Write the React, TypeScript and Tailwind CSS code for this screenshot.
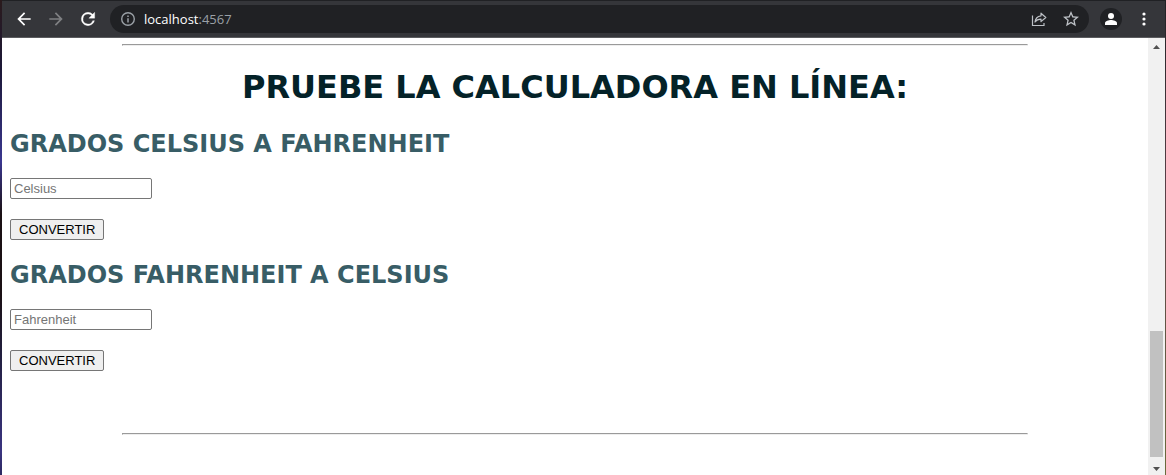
import React from "react";

function BackIcon({ className }: { className: string }) {
  return (
    <svg viewBox="0 0 24 24" className={className} fill="currentColor" aria-hidden="true">
      <path d="M20 11H7.83l5.59-5.59L12 4l-8 8 8 8 1.41-1.41L7.83 13H20z" />
    </svg>
  );
}

function Toolbar() {
  return (
    <header className="flex h-[38px] shrink-0 items-center border-t border-b border-t-[#202124] border-b-[#5b5c5f] bg-[#35363a] pr-[11px] pl-3">
      <nav className="flex items-center gap-3" aria-label="Navegación">
        <button type="button" aria-label="Atrás" className="flex size-5 items-center justify-center text-white">
          <BackIcon className="size-5" />
        </button>
        <button type="button" aria-label="Adelante" className="flex size-5 items-center justify-center text-[#7f8083]">
          <BackIcon className="size-5 rotate-180" />
        </button>
        <button type="button" aria-label="Recargar" className="flex size-5 items-center justify-center text-white">
          <svg viewBox="0 0 24 24" className="size-5 shrink-0" fill="currentColor" stroke="currentColor" strokeWidth="0.4" aria-hidden="true">
            <path d="M17.65 6.35A7.96 7.96 0 0 0 12 4a8 8 0 1 0 7.73 10h-2.08A6 6 0 1 1 12 6c1.66 0 3.14.69 4.22 1.78L13 11h7V4z" />
          </svg>
        </button>
      </nav>
      <div className="ml-3 flex h-7 min-w-0 flex-1 items-center rounded-full bg-[#202124] pr-[10px] pl-[10px]">
        <button type="button" aria-label="Información del sitio" className="mr-2 flex size-4 text-[#9aa0a6]">
          <svg viewBox="0 0 16 16" className="size-4" fill="none" stroke="currentColor" strokeWidth="1.4" aria-hidden="true">
            <circle cx="8" cy="8" r="6.3" />
            <path d="M8 7.2v4.2M8 4.4v1.6" strokeWidth="1.5" />
          </svg>
        </button>
        <div className="min-w-0 flex-1 truncate font-['Open_Sans',sans-serif] text-[13px] leading-5 text-white">
          localhost<span className="text-[#9aa0a6]">:4567</span>
        </div>
        <div className="flex items-center gap-4 text-[#bdc1c6]">
          <button type="button" aria-label="Compartir" className="flex size-4">
            <svg viewBox="0 0 16 16" className="size-4" fill="none" stroke="currentColor" strokeWidth="1.2" aria-hidden="true">
              <path d="M1.500 4.500v10h11.500v-2.500" />
              <path d="M10 2.200 14.800 6.500 10 10.600V8.200C7.200 8.200 5.400 9 4 11c.4-3.200 2.400-5.700 6-6.200z" strokeLinejoin="round" />
            </svg>
          </button>
          <button type="button" aria-label="Agregar a favoritos" className="flex size-4">
            <svg viewBox="2 2 20 20" className="size-4" fill="currentColor" aria-hidden="true">
              <path d="m22 9.240-7.190-.62L12 2 9.190 8.630 2 9.240l5.460 4.730L5.820 21 12 17.270 18.180 21l-1.630-7.030zM12 15.400l-3.760 2.270 1-4.280-3.320-2.880 4.380-.38L12 6.100l1.710 4.040 4.380.38-3.320 2.880 1 4.280z" />
            </svg>
          </button>
        </div>
      </div>
      <button type="button" aria-label="Perfil" className="ml-[11px] flex size-[22px] items-center justify-center rounded-full bg-[#202124] text-white">
        <svg viewBox="0 0 12 12" className="size-3" fill="currentColor" aria-hidden="true">
          <circle cx="6" cy="3" r="3" />
          <path d="M0 12v-1.800C0 8 3.800 7.100 6 7.100s6 .9 6 3.100V12z" />
        </svg>
      </button>
      <button type="button" aria-label="Más opciones" className="ml-3 flex h-4 w-5 items-center justify-center text-white">
        <svg viewBox="0 0 4 14" className="h-[14px] w-1" fill="currentColor" aria-hidden="true">
          <circle cx="2" cy="2" r="1.600" />
          <circle cx="2" cy="7" r="1.600" />
          <circle cx="2" cy="12" r="1.600" />
        </svg>
      </button>
    </header>
  );
}

function Converter({ id, title, unit }: { id: string; title: string; unit: string }) {
  return (
    <form className="flex flex-col items-start" onSubmit={(event) => event.preventDefault()}>
      <h2 className="mb-[18px] font-['DejaVu_Sans',sans-serif] text-2xl leading-[31px] font-bold text-[#385d66]">
        <label htmlFor={id}>{title}</label>
      </h2>
      <input
        id={id}
        type="text"
        placeholder={unit}
        className="mb-5 h-[21px] w-[142px] rounded-xs border border-[#767676] bg-white px-[3px] font-['Liberation_Sans',sans-serif] text-[13px] leading-[15px] text-black placeholder:text-[#757575]"
      />
      <button
        type="submit"
        className="h-[21px] rounded-xs border border-[#767676] bg-[#efefef] px-2 font-['Liberation_Sans',sans-serif] text-[13px] leading-[15px] text-black"
      >
        CONVERTIR
      </button>
    </form>
  );
}

function Rule() {
  return <hr className="mx-auto box-content w-4/5 border border-t-[#9a9a9a] border-r-[#eeeeee] border-b-[#eeeeee] border-l-[#9a9a9a]" />;
}

function ScrollBar() {
  return (
    <div className="flex w-[17px] shrink-0 flex-col items-center bg-[#f1f1f1] text-[#505050]" aria-hidden="true">
      <svg viewBox="0 0 17 17" className="size-[17px]" fill="currentColor">
        <path d="M5 11h7L8.500 7z" />
      </svg>
      <div className="flex-[276]" />
      <div className="w-[13px] flex-[126] bg-[#c1c1c1]" />
      <div className="h-px" />
      <svg viewBox="0 0 17 17" className="size-[17px]" fill="currentColor">
        <path d="M5 9h7l-3.500 4z" />
      </svg>
    </div>
  );
}

export default function App() {
  return (
    <div className="flex min-h-screen bg-white">
      <div className="w-[2px] shrink-0 bg-[linear-gradient(to_bottom,#2a1a1c_0%,#1c1838_15%,#3a3790_34%,#1a1014_45%,#1a1014_62%,#221f40_75%,#3a3480_95%,#2c2860_100%)]" />
      <div className="flex min-w-0 flex-1 flex-col">
        <Toolbar />
        <div className="flex flex-1">
          <main className="min-w-0 flex-1 px-2 pt-[6px] pb-10">
            <Rule />
            <h1 className="mt-[22px] mb-[23px] text-center font-['DejaVu_Sans',sans-serif] text-[32px] leading-[38px] font-bold text-[#042228]">
              PRUEBE LA CALCULADORA EN LÍNEA:
            </h1>
            <div className="mb-[62px] flex flex-col gap-5">
              <Converter id="celsius" title="GRADOS CELSIUS A FAHRENHEIT" unit="Celsius" />
              <Converter id="fahrenheit" title="GRADOS FAHRENHEIT A CELSIUS" unit="Fahrenheit" />
            </div>
            <Rule />
          </main>
          <ScrollBar />
        </div>
      </div>
      <div className="w-px shrink-0 bg-linear-to-b from-[#202124] via-[#5a4048] via-40% to-[#6b6a3a]" />
    </div>
  );
}
